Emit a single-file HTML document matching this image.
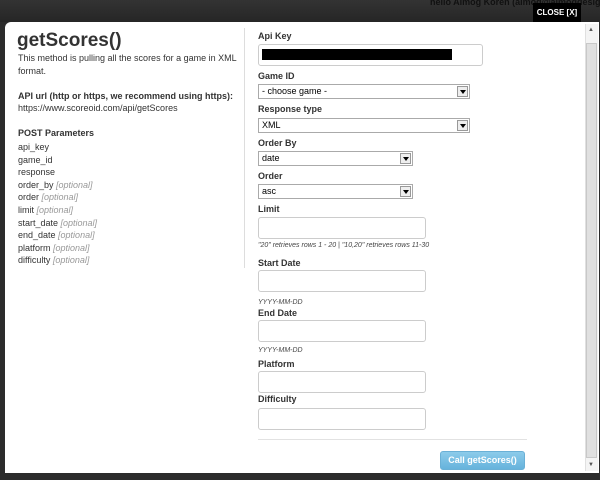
<!DOCTYPE html>
<html><head><style>
*{margin:0;padding:0;box-sizing:border-box}
body{width:600px;height:480px;background:#2c2c2c;position:relative;overflow:hidden;font-family:"Liberation Sans",Arial,sans-serif;color:#333}
.a{position:absolute;white-space:nowrap}
.topbar{position:absolute;left:0;top:0;width:600px;height:22px;background:linear-gradient(#333,#262626)}
.modal{position:absolute;left:5px;top:22px;width:594px;height:451px;background:#fff;border-radius:6px 0 0 0}
.lbl{font-size:9px;font-weight:bold;color:#333;left:258px}
.inp{position:absolute;left:258px;width:168px;height:22px;border:1px solid #ccc;border-radius:3px;background:#fff}
.sel{position:absolute;left:258px;height:15px;border:1px solid #aaa;background:#fff;font-size:9px;padding-left:3px;line-height:13px;color:#000}
.sel i{position:absolute;right:1px;top:1px;width:11px;height:11px;border:1px solid #999;background:#eee}
.sel i:after{content:"";position:absolute;left:2px;top:3px;border-left:3px solid transparent;border-right:3px solid transparent;border-top:4px solid #000}
.t{font-size:9px;color:#333;left:18px}
.o{color:#999;font-style:italic}
.h{font-size:7px;font-style:italic;color:#444;left:258px}
</style></head><body>
<div class="topbar"></div>
<div class="a" style="left:430px;top:-3px;font-size:9px;font-weight:bold;color:#111">hello Almog Koren (almog@almogdesign.net</div>
<div class="a" style="left:533px;top:3px;width:48px;height:19px;background:#000;color:#fff;font-size:8px;font-weight:bold;text-align:center;line-height:19px">CLOSE [X]</div>
<div class="modal"></div>
<div class="a" style="left:585px;top:24px;width:13px;height:447px;background:#f4f4f4;border-left:1px solid #e0e0e0"></div>
<div class="a" style="left:586px;top:43px;width:11px;height:415px;background:#e0e0e0;border:1px solid #c8c8c8"></div>
<div class="a" style="left:588px;top:27px;font-size:6px;color:#555">▲</div>
<div class="a" style="left:588px;top:462px;font-size:6px;color:#555">▼</div>

<div class="a" style="left:17px;top:30px;font-size:19px;font-weight:bold;color:#333">getScores()</div>
<div class="a t" style="top:52px;line-height:13px">This method is pulling all the scores for a game in XML<br>format.</div>
<div class="a t" style="top:91px;font-weight:bold">API url (http or https, we recommend using https):</div>
<div class="a t" style="top:103px">https://www.scoreoid.com/api/getScores</div>
<div class="a t" style="top:128px;font-weight:bold">POST Parameters</div>
<div class="a t" style="top:141px;line-height:12.6px">api_key<br>game_id<br>response<br>order_by <span class="o">[optional]</span><br>order <span class="o">[optional]</span><br>limit <span class="o">[optional]</span><br>start_date <span class="o">[optional]</span><br>end_date <span class="o">[optional]</span><br>platform <span class="o">[optional]</span><br>difficulty <span class="o">[optional]</span></div>
<div class="a" style="left:244px;top:28px;width:1px;height:240px;background:#ddd"></div>

<div class="a lbl" style="top:31px">Api Key</div>
<div class="inp" style="top:44px;width:225px"></div>
<div class="a" style="left:262px;top:49px;width:190px;height:11px;background:#000"></div>
<div class="a lbl" style="top:71px">Game ID</div>
<div class="sel" style="top:84px;width:212px">- choose game -<i></i></div>
<div class="a lbl" style="top:104px">Response type</div>
<div class="sel" style="top:118px;width:212px">XML<i></i></div>
<div class="a lbl" style="top:138px">Order By</div>
<div class="sel" style="top:151px;width:155px">date<i></i></div>
<div class="a lbl" style="top:171px">Order</div>
<div class="sel" style="top:184px;width:155px">asc<i></i></div>
<div class="a lbl" style="top:204px">Limit</div>
<div class="inp" style="top:217px"></div>
<div class="a h" style="top:242px">"20" retrieves rows 1 - 20 | "10,20" retrieves rows 11-30</div>
<div class="a lbl" style="top:258px">Start Date</div>
<div class="inp" style="top:270px"></div>
<div class="a h" style="top:299px">YYYY-MM-DD</div>
<div class="a lbl" style="top:308px">End Date</div>
<div class="inp" style="top:320px"></div>
<div class="a h" style="top:347px">YYYY-MM-DD</div>
<div class="a lbl" style="top:359px">Platform</div>
<div class="inp" style="top:371px"></div>
<div class="a lbl" style="top:394px">Difficulty</div>
<div class="inp" style="top:408px"></div>
<div class="a" style="left:258px;top:439px;width:269px;height:1px;background:#e2e2e2"></div>
<div class="a" style="left:440px;top:451px;width:85px;height:19px;border-radius:3px;background:linear-gradient(#8ccbea,#66b3dc);border:1px solid #6ab0d6;color:#fff;font-size:9px;font-weight:bold;text-align:center;line-height:17px">Call getScores()</div>
</body></html>
